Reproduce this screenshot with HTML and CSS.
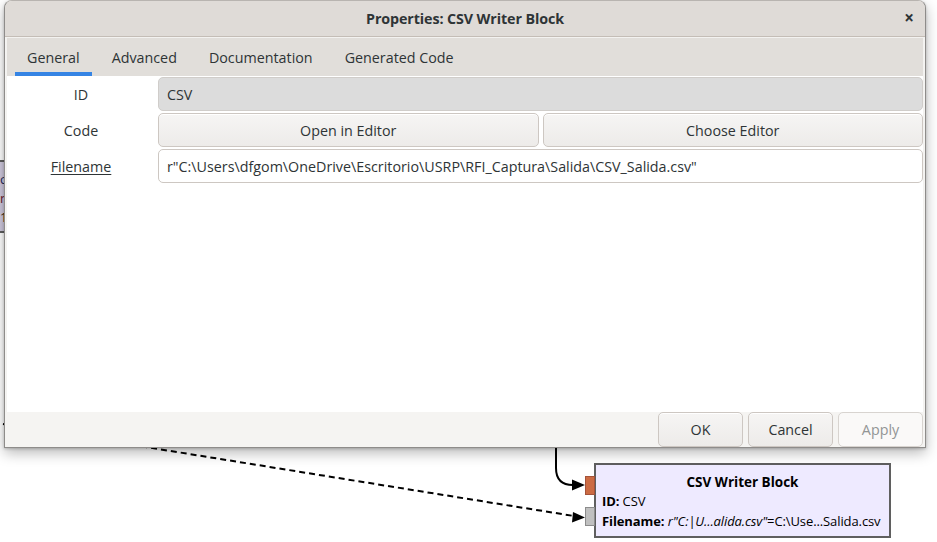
FILE: index.html
```html
<!DOCTYPE html>
<html>
<head>
<meta charset="utf-8">
<title>Properties: CSV Writer Block</title>
<link rel="stylesheet" href="styles.css">
</head>
<body>
<div class="canvas">
  <svg class="wires" width="937" height="542" viewBox="0 0 937 542">
    <path d="M3 424 L574 516" stroke="#000" stroke-width="2" stroke-dasharray="6 4" fill="none"/>
    <polygon points="585,517.5 573,512 572,522.5" fill="#000"/>
    <path d="M556 440 L556 468 Q556 485 573 485" stroke="#000" stroke-width="2" fill="none"/>
    <polygon points="585,485 572,479.5 572,490.5" fill="#000"/>
  </svg>
  <div class="node node-left">
    <div class="nl nl-a">c</div>
    <div class="nl nl-b">n</div>
    <div class="nl nl-c">1</div>
  </div>
  <div class="node node-csv">
    <span class="port port-in"></span>
    <span class="port port-msg"></span>
    <div class="node-title">CSV Writer Block</div>
    <div class="node-line"><b>ID:</b> CSV</div>
    <div class="node-line"><b>Filename:</b> <i>r"C:|U...alida.csv"</i>=C:\Use...Salida.csv</div>
  </div>
</div>

<div class="dialog">
  <div class="titlebar">
    <span class="title">Properties: CSV Writer Block</span>
    <span class="close">×</span>
  </div>
  <div class="notebook">
    <div class="tabs">
      <div class="tab active">General</div>
      <div class="tab">Advanced</div>
      <div class="tab">Documentation</div>
      <div class="tab">Generated Code</div>
    </div>
    <div class="page">
      <div class="form">
        <div class="label">ID</div>
        <div class="entry readonly">CSV</div>
        <div class="label">Code</div>
        <div class="btnpair">
          <button class="btn">Open in Editor</button>
          <button class="btn">Choose Editor</button>
        </div>
        <div class="label"><span class="u">Filename</span></div>
        <div class="entry">r"C:\Users\dfgom\OneDrive\Escritorio\USRP\RFI_Captura\Salida\CSV_Salida.csv"</div>
      </div>
    </div>
  </div>
  <div class="actions">
    <button class="btn abtn">OK</button>
    <button class="btn abtn">Cancel</button>
    <button class="btn abtn disabled">Apply</button>
  </div>
</div>
</body>
</html>
```

FILE: styles.css
```css
html, body {
  margin: 0;
  padding: 0;
  width: 937px;
  height: 542px;
  background: #ffffff;
  overflow: hidden;
  font-family: "Open Sans", "Noto Sans", sans-serif;
}

body {
  position: relative;
}

.canvas {
  position: absolute;
  left: 0;
  top: 0;
  width: 937px;
  height: 542px;
}

.wires {
  position: absolute;
  left: 0;
  top: 0;
}

.node {
  position: absolute;
  box-sizing: border-box;
  border: 2px solid #5f5f5f;
  background: #eeeaff;
}

.node-left {
  left: -20px;
  top: 160px;
  width: 28px;
  height: 73px;
  background: #cfc9de;
  font-family: "Open Sans", sans-serif;
  font-size: 13px;
  padding: 8px 0 0 18px;
}

.nl {
  line-height: 19px;
}
.nl-a { color: #1d2a5a; }
.nl-b { color: #6a1830; }
.nl-c { color: #3a2a10; }

.node-csv {
  left: 594px;
  top: 463px;
  width: 297px;
  height: 75px;
  padding: 8px 6px 0 6px;
  font-family: "Open Sans", "Noto Sans", sans-serif;
  font-size: 13px;
  color: #000;
}

.node-title {
  text-align: center;
  font-weight: 700;
  font-size: 13.5px;
  line-height: 19px;
}

.node-line {
  line-height: 19.5px;
  white-space: nowrap;
  letter-spacing: -0.1px;
}

.node-line b {
  font-weight: 700;
}

.port {
  position: absolute;
  left: -11px;
  width: 10px;
  box-sizing: border-box;
}

.port-in {
  top: 11px;
  height: 19px;
  background: #cc6b43;
  border: 1px solid #a4533a;
}

.port-msg {
  top: 42px;
  height: 19px;
  background: #c0c0c0;
  border: 1px solid #8c8c8c;
}

/* ---------- dialog ---------- */

.dialog {
  position: absolute;
  left: 4px;
  top: 0;
  width: 922px;
  height: 448px;
  box-sizing: border-box;
  border: 1px solid #8e8c8a;
  border-top-color: #b8b4b0;
  border-radius: 8px 8px 0 0;
  background: #f5f4f2;
  display: flex;
  flex-direction: column;
  box-shadow: 0 5px 14px rgba(0, 0, 0, 0.28), 0 1px 3px rgba(0, 0, 0, 0.2);
  color: #2e3436;
  font-size: 14.3px;
}

.titlebar {
  height: 35px;
  flex: none;
  background: #dfdbd7;
  border-bottom: 1px solid #c4bdb6;
  border-radius: 7px 7px 0 0;
  display: flex;
  align-items: center;
  justify-content: center;
  position: relative;
}

.title {
  font-weight: 700;
  font-size: 14.3px;
  color: #2e3436;
  letter-spacing: -0.1px;
}

.close {
  position: absolute;
  right: 11px;
  top: 7px;
  font-size: 17px;
  font-weight: 700;
  color: #2e3436;
  line-height: 20px;
}

.notebook {
  flex: 1;
  display: flex;
  flex-direction: column;
  border-top: 1px solid #f3f2f0;
  margin: 0 1px 0 1px;
  border-left: 1px solid #f3f2f0;
  border-right: 1px solid #f3f2f0;
}

.tabs {
  height: 38px;
  flex: none;
  background: #e1deda;
  display: flex;
  gap: 8px;
  padding-left: 8px;
}

.tab {
  box-sizing: border-box;
  height: 38px;
  padding: 0 12px;
  display: flex;
  align-items: center;
  border-bottom: 4px solid transparent;
  padding-top: 4px;
  color: #2e3436;
}

.tab.active {
  border-bottom-color: #3584e4;
}

.page {
  flex: 1;
  background: #ffffff;
}

.form {
  display: grid;
  grid-template-columns: 148px 1fr;
  grid-template-rows: 34px 34px 34px;
  column-gap: 3px;
  row-gap: 2px;
  padding: 1px 0 0 0;
}

.label {
  display: flex;
  align-items: center;
  justify-content: center;
  color: #2e3436;
}

.u {
  text-decoration: underline;
  text-underline-offset: 2px;
}

.entry {
  box-sizing: border-box;
  border: 1px solid #cdc7c2;
  border-radius: 5px;
  background: #ffffff;
  display: flex;
  align-items: center;
  padding: 0 8px;
  white-space: nowrap;
  color: #2e3436;
}

.entry.readonly {
  background: #dcdcdc;
  border-color: #d0cdca;
}

.btnpair {
  display: flex;
  gap: 4px;
}

.btn {
  flex: 1;
  font-family: inherit;
  font-size: 14.3px;
  color: #2e3436;
  background: linear-gradient(#f6f5f4, #edebe9);
  border: 1px solid #cdc7c2;
  border-radius: 5px;
  padding: 0;
  margin: 0;
  box-shadow: inset 0 1px #ffffff;
}

.actions {
  height: 35px;
  flex: none;
  background: #f5f4f2;
  display: flex;
  justify-content: flex-end;
  align-items: flex-start;
  gap: 5px;
  padding: 0 2px 0 0;
}

.abtn {
  flex: none;
  width: 85px;
  height: 35px;
}

.abtn.disabled {
  color: #929595;
  background: #faf9f8;
  border-color: #d8d4d0;
  box-shadow: none;
}
```
